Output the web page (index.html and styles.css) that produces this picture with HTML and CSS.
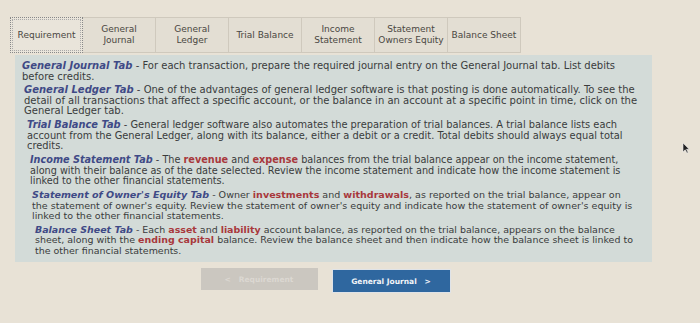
FILE: index.html
```html
<!DOCTYPE html>
<html>
<head>
<meta charset="utf-8">
<link rel="stylesheet" href="styles.css">
</head>
<body>
<div class="page">
  <div class="tabs">
    <div class="tab active">Requirement</div>
    <div class="tab">General<br>Journal</div>
    <div class="tab">General<br>Ledger</div>
    <div class="tab">Trial Balance</div>
    <div class="tab">Income<br>Statement</div>
    <div class="tab">Statement<br>Owners Equity</div>
    <div class="tab">Balance Sheet</div>
  </div>
  <div class="panel">
    <p class="p0"><span class="hd">General Journal Tab</span> - For each transaction, prepare the required journal entry on the General Journal tab. List debits<br>before credits.</p>
    <p class="p1"><span class="hd">General Ledger Tab</span> - One of the advantages of general ledger software is that posting is done automatically. To see the<br>detail of all transactions that affect a specific account, or the balance in an account at a specific point in time, click on the<br>General Ledger tab.</p>
    <p class="p2"><span class="hd">Trial Balance Tab</span> - General ledger software also automates the preparation of trial balances. A trial balance lists each<br>account from the General Ledger, along with its balance, either a debit or a credit. Total debits should always equal total<br>credits.</p>
    <p class="p3"><span class="hd">Income Statement Tab</span> - The <span class="hl">revenue</span> and <span class="hl">expense</span> balances from the trial balance appear on the income statement,<br>along with their balance as of the date selected. Review the income statement and indicate how the income statement is<br>linked to the other financial statements.</p>
    <p class="p4"><span class="hd">Statement of Owner's Equity Tab</span> - Owner <span class="hl">investments</span> and <span class="hl">withdrawals</span>, as reported on the trial balance, appear on<br>the statement of owner's equity. Review the statement of owner's equity and indicate how the statement of owner's equity is<br>linked to the other financial statements.</p>
    <p class="p5"><span class="hd">Balance Sheet Tab</span> - Each <span class="hl">asset</span> and <span class="hl">liability</span> account balance, as reported on the trial balance, appears on the balance<br>sheet, along with the <span class="hl">ending capital</span> balance. Review the balance sheet and then indicate how the balance sheet is linked to<br>the other financial statements.</p>
  </div>
  <div class="nav">
    <button class="btn prev">&lt;&nbsp;&nbsp;&nbsp;Requirement</button>
    <button class="btn next">General Journal&nbsp;&nbsp;&nbsp;&gt;</button>
  </div>
  <svg class="cursor" width="8" height="12" viewBox="0 0 8 12"><path d="M1 1 L1 10 L3.2 7.8 L5 11 L6.2 10.4 L4.5 7.3 L7.2 7.3 Z" fill="#222" stroke="#eee" stroke-width="0.6"/></svg>
</div>
</body>
</html>
```
FILE: styles.css
```css
html, body {
  margin: 0;
  padding: 0;
}
body {
  background: #e8e2d6;
  width: 700px;
  height: 323px;
  overflow: hidden;
  font-family: "DejaVu Sans", Verdana, sans-serif;
}
.page {
  position: relative;
  padding: 17px 0 0 10px;
}
.tabs {
  display: flex;
  height: 36px;
}
.tab {
  width: 73px;
  box-sizing: border-box;
  display: flex;
  align-items: center;
  justify-content: center;
  text-align: center;
  font-size: 9px;
  line-height: 11px;
  color: #4a4742;
  background: #e3ded3;
  border: 1px solid #cfc9bd;
  border-left: none;
}
.tab:first-child {
  border-left: 1px solid #cfc9bd;
}
.tab.active {
  background: #e9e4da;
  border: 1px dotted #888;
  outline: 1px dotted #aaa;
  outline-offset: -3px;
}
.panel {
  margin: 2px 0 0 5px;
  width: 637px;
  height: 207px;
  box-sizing: border-box;
  background: #d3dbd8;
  padding: 6px 4px 0 7px;
  line-height: 10.5px;
  color: #3a3c3c;
  white-space: nowrap;
}
.panel p {
  margin: 0 0 3.4px 0;
}
.p0 { font-size: 10px; }
.p1 { font-size: 10px; padding-left: 2px; }
.p2 { font-size: 9.85px; padding-left: 5px; }
.p3 { font-size: 9.7px; padding-left: 8px; }
.p4 { font-size: 9.56px; padding-left: 10px; }
.p5 { font-size: 9.46px; padding-left: 13px; }
.hd {
  font-weight: bold;
  font-style: italic;
  color: #3f4a86;
}
.hl {
  font-weight: bold;
  color: #a8383c;
}
.nav {
  display: flex;
  justify-content: center;
  gap: 15px;
  margin-top: 6px;
  width: 630px;
}
.btn {
  width: 117px;
  height: 22px;
  border: none;
  font-family: "DejaVu Sans", Verdana, sans-serif;
  font-size: 7.5px;
  font-weight: bold;
  padding: 0;
}
.prev {
  background: #cbc7c0;
  color: #dcd8d2;
}
.next {
  background: #2f679f;
  color: #f2f4f8;
  margin-top: 2px;
  box-shadow: 0 0 0 1px #dfe3e8;
}
.cursor {
  position: absolute;
  left: 682px;
  top: 142px;
}
```
